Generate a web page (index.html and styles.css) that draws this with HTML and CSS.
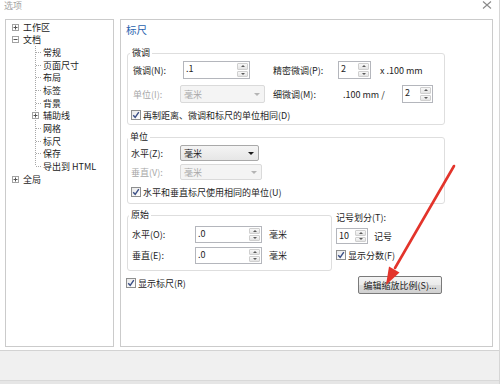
FILE: index.html
```html
<!DOCTYPE html>
<html lang="zh-CN">
<head>
<meta charset="utf-8">
<title>选项</title>
<link rel="stylesheet" href="styles.css">
</head>
<body>
<div class="window">
  <div class="titlebar">
    <span class="title">选项</span>
    <svg class="close" width="10" height="8" viewBox="0 0 10 8"><path d="M1 0.5L9 7.5M9 0.5L1 7.5" stroke="#8a8a8a" stroke-width="1.1" fill="none"/></svg>
  </div>
  <div class="main">
    <div class="tree-panel">
      <ul class="tree">
        <li><div class="row"><svg class="exp" width="7" height="7" viewBox="0 0 7 7"><rect x="0.5" y="0.5" width="6" height="6" fill="#fff" stroke="#a3a3a3"/><path d="M1.5 3.5h4M3.5 1.5v4" stroke="#555"/></svg>工作区</div></li>
        <li><div class="row"><svg class="exp" width="7" height="7" viewBox="0 0 7 7"><rect x="0.5" y="0.5" width="6" height="6" fill="#fff" stroke="#a3a3a3"/><path d="M1.5 3.5h4" stroke="#555"/></svg>文档</div>
          <ul class="sub">
            <li><div class="row leaf">常规</div></li>
            <li><div class="row leaf">页面尺寸</div></li>
            <li><div class="row leaf">布局</div></li>
            <li><div class="row leaf">标签</div></li>
            <li><div class="row leaf">背景</div></li>
            <li><div class="row node"><svg class="exp sexp" width="7" height="7" viewBox="0 0 7 7"><rect x="0.5" y="0.5" width="6" height="6" fill="#fff" stroke="#a3a3a3"/><path d="M1.5 3.5h4M3.5 1.5v4" stroke="#555"/></svg>辅助线</div></li>
            <li><div class="row leaf">网格</div></li>
            <li><div class="row leaf">标尺</div></li>
            <li><div class="row leaf">保存</div></li>
            <li class="last"><div class="row leaf">导出到 HTML</div></li>
          </ul>
        </li>
        <li><div class="row"><svg class="exp" width="7" height="7" viewBox="0 0 7 7"><rect x="0.5" y="0.5" width="6" height="6" fill="#fff" stroke="#a3a3a3"/><path d="M1.5 3.5h4M3.5 1.5v4" stroke="#555"/></svg>全局</div></li>
      </ul>
    </div>
    <div class="content">
      <div class="heading">标尺</div>

      <fieldset class="group g1">
        <legend>微调</legend>
        <div class="frow h18 mt3">
          <span class="lbl w50">微调(N):</span>
          <span class="spin w67"><span class="val">.1</span><span class="btns"><i class="up"></i><i class="dn"></i></span></span>
          <span class="lbl w65 ml23">精密微调(P):</span>
          <span class="spin w33"><span class="val">2</span><span class="btns"><i class="up"></i><i class="dn"></i></span></span>
          <span class="lbl ml9">x .100 mm</span>
        </div>
        <div class="frow h18 mt6">
          <span class="lbl w47 dis">单位(I):</span>
          <span class="combo disabled w85"><span class="ctext">毫米</span><i class="carrow"></i></span>
          <span class="lbl w70 ml8">细微调(M):</span>
          <span class="lbl w59">.100 mm /</span>
          <span class="spin w31"><span class="val">2</span><span class="btns"><i class="up"></i><i class="dn"></i></span></span>
        </div>
        <div class="frow h14 mt5 cbrow">
          <span class="cb"><svg width="8" height="8" viewBox="0 0 8 8"><path d="M1.2 4.2L3.2 6.3L6.8 1.2" stroke="#3b4f86" stroke-width="1.4" fill="none"/></svg></span>
          <span class="lbl">再制距离、微调和标尺的单位相同(D)</span>
        </div>
      </fieldset>

      <fieldset class="group g2">
        <legend>单位</legend>
        <div class="frow h16 mt3">
          <span class="lbl w49">水平(Z):</span>
          <span class="combo w79"><span class="ctext">毫米</span><i class="carrow"></i></span>
        </div>
        <div class="frow h16 mt3">
          <span class="lbl w49 dis">垂直(V):</span>
          <span class="combo disabled w82"><span class="ctext">毫米</span><i class="carrow"></i></span>
        </div>
        <div class="frow h14 mt5">
          <span class="cb"><svg width="8" height="8" viewBox="0 0 8 8"><path d="M1.2 4.2L3.2 6.3L6.8 1.2" stroke="#3b4f86" stroke-width="1.4" fill="none"/></svg></span>
          <span class="lbl">水平和垂直标尺使用相同的单位(U)</span>
        </div>
      </fieldset>

      <div class="lower">
        <fieldset class="group g3">
          <legend>原始</legend>
          <div class="frow h17 mt6">
            <span class="lbl w63">水平(O):</span>
            <span class="spin w67"><span class="val">.0</span><span class="btns"><i class="up"></i><i class="dn"></i></span></span>
            <span class="lbl ml7">毫米</span>
          </div>
          <div class="frow h17 mt4">
            <span class="lbl w63">垂直(E):</span>
            <span class="spin w67"><span class="val">.0</span><span class="btns"><i class="up"></i><i class="dn"></i></span></span>
            <span class="lbl ml7">毫米</span>
          </div>
        </fieldset>
        <div class="ticks">
          <div class="lbl tlabel">记号划分(T):</div>
          <div class="frow h16 mt4">
            <span class="spin w32"><span class="val">10</span><span class="btns"><i class="up"></i><i class="dn"></i></span></span>
            <span class="lbl ml6">记号</span>
          </div>
          <div class="frow h14 mt4">
            <span class="cb"><svg width="8" height="8" viewBox="0 0 8 8"><path d="M1.2 4.2L3.2 6.3L6.8 1.2" stroke="#3b4f86" stroke-width="1.4" fill="none"/></svg></span>
            <span class="lbl">显示分数(F)</span>
          </div>
        </div>
      </div>

      <div class="bottomrow">
        <div class="frow h14 showrow">
          <span class="cb"><svg width="8" height="8" viewBox="0 0 8 8"><path d="M1.2 4.2L3.2 6.3L6.8 1.2" stroke="#3b4f86" stroke-width="1.4" fill="none"/></svg></span>
          <span class="lbl">显示标尺(R)</span>
        </div>
        <span class="button">编辑缩放比例(S)...</span>
      </div>
    </div>
  </div>
  <div class="footer"></div>
  <div class="footer-edge"></div>
  <svg class="annot" width="500" height="384" viewBox="0 0 500 384">
    <path d="M454 166L395 268" stroke="#e3342b" stroke-width="2.6" stroke-linecap="round" fill="none"/>
    <path d="M386 285L389 266.5L399.5 272.5Z" fill="#e3342b"/>
  </svg>
</div>
</body>
</html>
```

FILE: styles.css
```css
* { box-sizing: border-box; }

html, body { margin: 0; padding: 0; }

body {
  width: 500px;
  height: 384px;
  overflow: hidden;
  background: #ffffff;
  font-family: "Noto Sans CJK SC", "Microsoft YaHei", sans-serif;
  font-size: 9px;
  color: #1e1e1e;
}

.window {
  position: relative;
  width: 500px;
  height: 384px;
  border-right: 1px solid #d6d6d6;
}

.titlebar {
  height: 19px;
  display: flex;
  justify-content: space-between;
  align-items: flex-start;
  padding: 0 7px 0 4px;
}

.title {
  color: #a3a3a3;
  font-size: 9px;
  line-height: 12px;
}

.close { margin-top: 1px; }

.main {
  display: flex;
  gap: 6px;
  padding-left: 5px;
  height: 328px;
}

.tree-panel {
  width: 109px;
  height: 328px;
  border: 1px solid #cbcbcb;
  background: #fff;
}

.tree, .sub {
  list-style: none;
  margin: 0;
  padding: 0;
}

.tree { padding: 1px 0 0 6px; }

.row {
  height: 12.67px;
  display: flex;
  align-items: center;
  white-space: nowrap;
  color: #222;
}

.exp { margin-right: 4px; flex: none; }

.sub {
  margin-left: 23px;
  border-left: 1px dotted #a8a8a8;
}

.sub .last { margin-left: -1px; }
.sub .last .row { background: linear-gradient(to bottom, transparent 50%, #fff 50%) 0 0 / 1px 100% no-repeat; padding-left: 1px; }

.leaf::before {
  content: "";
  width: 5px;
  border-top: 1px dotted #a8a8a8;
  margin-right: 2px;
}

.node .sexp { margin-left: -4px; margin-right: 4px; }

.content {
  width: 373px;
  height: 328px;
  border: 1px solid #cbcbcb;
  background: #fff;
  padding: 3px 0 0 6px;
}

.heading {
  color: #2a62ad;
  font-size: 10.5px;
  line-height: 14px;
  margin-left: -1px;
}

.group {
  margin: 0;
  border: 1px solid #dedede;
  border-radius: 3px;
  min-width: 0;
  padding: 0;
}

.group legend {
  padding: 0 2px;
  margin-left: -3px;
  line-height: 10px;
  font-size: 9px;
  color: #222;
}

.g1 { width: 318px; margin-top: 11px; padding: 0 0 2px 5px; }
.g2 { width: 318px; margin-top: 7px; padding: 0 0 4px 3px; }
.g3 { width: 205px; padding: 0 0 6px 4px; flex: none; }

.frow { display: flex; align-items: center; white-space: nowrap; }
.h14 { height: 14px; }
.h16 { height: 16px; }
.h17 { height: 17px; }
.h18 { height: 18px; }
.mt3 { margin-top: 3px; }
.mt4 { margin-top: 4px; }
.mt5 { margin-top: 5px; }
.mt6 { margin-top: 6px; }

.lbl { flex: none; }
.dis { color: #a8a8a8; }
.w31 { width: 31px; }
.w32 { width: 32px; }
.w33 { width: 33px; }
.w47 { width: 47px; }
.w49 { width: 49px; }
.w50 { width: 50px; }
.w59 { width: 59px; }
.w63 { width: 63px; }
.w65 { width: 65px; }
.w67 { width: 67px; }
.w70 { width: 70px; }
.w79 { width: 79px; }
.w82 { width: 82px; }
.w85 { width: 85px; }
.ml6 { margin-left: 6px; }
.ml7 { margin-left: 7px; }
.ml8 { margin-left: 8px; }
.ml9 { margin-left: 9px; }
.ml23 { margin-left: 23px; }

.spin {
  flex: none;
  height: 100%;
  display: flex;
  border: 1px solid #b4b6bc;
  background: #fff;
}

.spin .val {
  flex: 1;
  padding: 1px 0 0 2px;
  line-height: 12px;
}

.spin .btns {
  width: 12px;
  display: flex;
  flex-direction: column;
  gap: 1px;
  padding: 1px 1px 1px 0;
}

.btns i {
  flex: 1;
  display: flex;
  align-items: center;
  justify-content: center;
  border: 1px solid #cfcfcf;
  border-radius: 1px;
  background: linear-gradient(#f8f8f8, #e4e4e4);
}

.btns .up::after {
  content: "";
  border-left: 2px solid transparent;
  border-right: 2px solid transparent;
  border-bottom: 2px solid #5a5a5a;
}

.btns .dn::after {
  content: "";
  border-left: 2px solid transparent;
  border-right: 2px solid transparent;
  border-top: 2px solid #5a5a5a;
}

.combo {
  flex: none;
  height: 100%;
  display: flex;
  align-items: center;
  border: 1px solid #a9a9a9;
  border-radius: 2px;
  background: linear-gradient(#f4f4f4, #e6e6e6);
  padding-left: 3px;
}

.combo .ctext { flex: 1; }

.carrow {
  margin-right: 4px;
  border-left: 3px solid transparent;
  border-right: 3px solid transparent;
  border-top: 3px solid #1a1a1a;
}

.combo.disabled {
  border-color: #dadada;
  background: #f4f4f4;
  color: #a8a8a8;
}

.combo.disabled .carrow { border-top-color: #b4b4b4; }

.cb {
  flex: none;
  width: 10px;
  height: 10px;
  margin-right: 2px;
  border: 1px solid #8e8f8f;
  background: linear-gradient(135deg, #e9e9e9, #ffffff);
  display: flex;
  align-items: center;
  justify-content: center;
}

.cbrow { margin-left: -2px; }
.g2 .cbrow, .g2 .frow .cb { margin-left: 0; }

.lower {
  display: flex;
  margin-top: 6px;
}

.ticks {
  margin-left: 4px;
}

.tlabel {
  margin-top: 2px;
  line-height: 12px;
}

.bottomrow {
  display: flex;
  align-items: flex-start;
  width: 318px;
  margin-top: 5px;
}

.showrow { margin-left: -1px; }

.button {
  margin-left: auto;
  margin-right: 3px;
  width: 84px;
  height: 18px;
  display: flex;
  align-items: center;
  justify-content: center;
  border: 1px solid #7a7a7a;
  border-radius: 2px;
  background: linear-gradient(#f4f4f4 0%, #ebebeb 48%, #dddddd 52%, #d0d0d0 100%);
  color: #1e1e1e;
}

.footer {
  margin-top: 3px;
  height: 31px;
  border-top: 1px solid #d3d3d3;
  border-bottom: 1px solid #d9d9d9;
  background: #f0f0f0;
}

.footer-edge {
  height: 3px;
  background: #e6e6e6;
}

.annot {
  position: absolute;
  left: 0;
  top: 0;
  pointer-events: none;
}
```
